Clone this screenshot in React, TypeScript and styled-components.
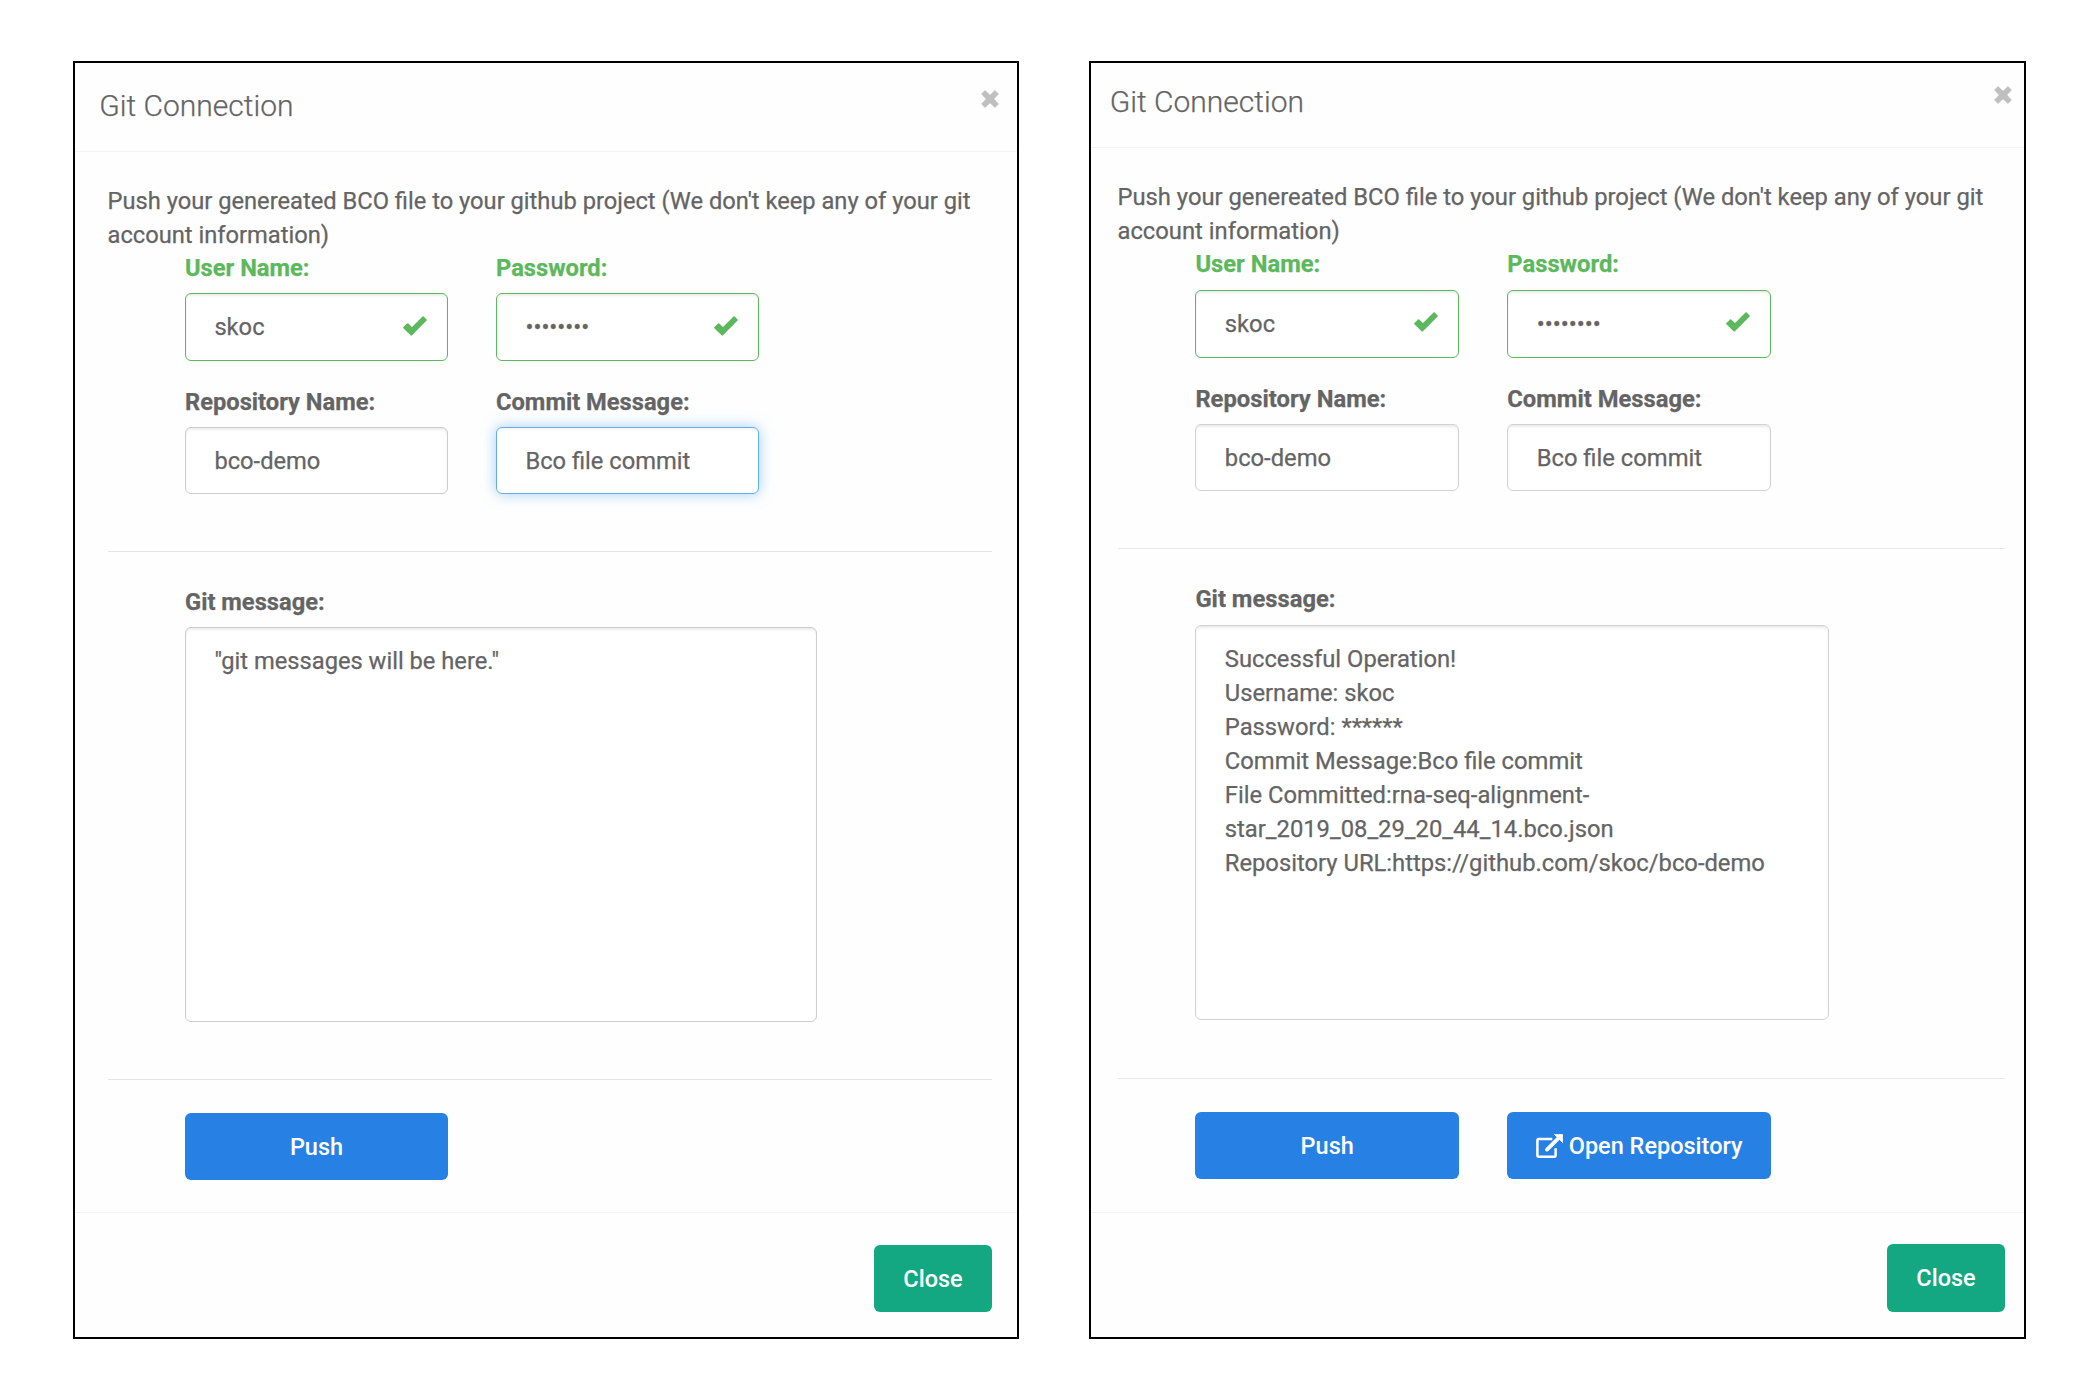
import styled, { createGlobalStyle, css, ThemeProvider } from 'styled-components';

const GlobalStyle = createGlobalStyle`
  * { box-sizing: border-box; }
  body {
    margin: 0;
    background: #fff;
    color: #646464;
    font-family: Roboto, "Liberation Sans", sans-serif;
  }
`;

type Metrics = {
  width: number;
  header: number;
  titleTop: number;
  titleLeft: number;
  closeRight: number;
  padLeft: number;
  padRight: number;
  introTop: number;
  introHeight: number;
  indent: number;
  colWidth: number;
  colGap: number;
  labelGap: number;
  validHeight: number;
  outputWidth: number;
  outputHeight: number;
  outputAfter: number;
  buttonHeight: number;
  bodyBottom: number;
  footerTop: number;
  font: number;
  line: string;
  rule: string;
};

type Themed = { theme: any };

const Page = styled.main`
  display: flex;
  align-items: flex-start;
  gap: 70px;
  width: 2100px;
  height: 1400px;
  padding: 61px 0 0 73px;
`;

const Modal = styled.section<Themed>`
  display: flex;
  flex-direction: column;
  width: ${(p) => p.theme.width}px;
  height: 1278px;
  border: 2px solid #000;
  background: #fefefe;
  font-size: ${(p) => p.theme.font}px;
  line-height: 34px;
  -webkit-text-stroke: 0.25px currentColor;
`;

const Header = styled.header<Themed>`
  display: flex;
  flex: none;
  justify-content: space-between;
  align-items: flex-start;
  height: ${(p) => p.theme.header}px;
  padding: ${(p) => p.theme.titleTop}px ${(p) => p.theme.closeRight}px 0 ${(p) => p.theme.titleLeft}px;
  border-bottom: 1px solid #f3f3f3;
`;

const Title = styled.h4`
  margin: 0;
  font-size: 30px;
  font-weight: 300;
  line-height: 34px;
`;

const Dismiss = styled.button`
  display: flex;
  margin-top: 1px;
  padding: 0;
  border: 0;
  background: none;
  color: #bfbfbf;
`;

const Body = styled.div<Themed>`
  flex: none;
  padding: ${(p) => p.theme.introTop}px ${(p) => p.theme.padRight}px ${(p) => p.theme.bodyBottom}px
    ${(p) => p.theme.padLeft}px;
`;

const Intro = styled.p<Themed>`
  height: ${(p) => p.theme.introHeight}px;
  margin: 0 0 0 -0.5px;
  white-space: pre-line;
`;

const Fields = styled.div<Themed>`
  display: grid;
  grid-template-columns: repeat(2, ${(p) => p.theme.colWidth}px);
  column-gap: ${(p) => p.theme.colGap}px;
  row-gap: 24px;
  margin-left: ${(p) => p.theme.indent}px;
`;

const Label = styled.label<Themed & { $valid?: boolean }>`
  display: block;
  margin-bottom: ${(p) => p.theme.labelGap}px;
  font-weight: 700;
  color: ${(p) => (p.$valid ? '#5cb85c' : '#646464')};
`;

const Control = styled.div<Themed & { $state?: 'valid' | 'focus' }>`
  display: flex;
  align-items: center;
  justify-content: space-between;
  height: ${(p) => (p.$state === 'valid' ? p.theme.validHeight : 67)}px;
  padding: 0 20px 0 28.4px;
  border: 1px solid ${(p) => p.theme.line};
  border-radius: 6px;
  background: #fff;
  box-shadow: inset 0 2px 2px rgba(0, 0, 0, 0.075);
  ${(p) => p.$state === 'valid' && css`border-color: #5cb85c;`}
  ${(p) => p.$state === 'focus' && css`
    border-color: #66afe9;
    box-shadow: inset 0 2px 2px rgba(0, 0, 0, 0.04), 0 0 14px rgba(102, 175, 233, 0.6);
  `}

  svg {
    margin-top: -3px;
  }
`;

const Rule = styled.hr<Themed & { $before: number }>`
  height: 1px;
  margin: ${(p) => p.$before}px 0 33px;
  border: 0;
  background: ${(p) => p.theme.rule};
`;

const Message = styled.div<Themed>`
  margin-left: ${(p) => p.theme.indent}px;
`;

const Output = styled.div<Themed>`
  width: ${(p) => p.theme.outputWidth}px;
  height: ${(p) => p.theme.outputHeight}px;
  padding: 16px 28.4px;
  border: 1px solid ${(p) => p.theme.line};
  border-radius: 6px;
  background: #fff;
  box-shadow: inset 0 2px 2px rgba(0, 0, 0, 0.075);
  white-space: pre-line;
`;

const Button = styled.button<Themed & { $tone: 'primary' | 'success' }>`
  display: flex;
  align-items: center;
  justify-content: center;
  gap: 6px;
  height: ${(p) => p.theme.buttonHeight}px;
  padding: 0 28px;
  border: 0;
  border-radius: 6px;
  background: ${(p) => (p.$tone === 'primary' ? '#2780e3' : '#13a881')};
  color: #fff;
  font: 500 23.5px/34px Roboto, "Liberation Sans", sans-serif;
  white-space: nowrap;
  -webkit-text-stroke: 0;
`;

const Footer = styled.footer<Themed>`
  display: flex;
  flex: 1;
  justify-content: flex-end;
  align-items: flex-start;
  padding: ${(p) => p.theme.footerTop}px ${(p) => p.theme.padRight}px 0;
  border-top: 1px solid #f3f3f3;
`;

const CloseButton = styled(Button)`
  width: 118px;
`;

const Check = () => (
  <svg width="24" height="20" viewBox="0 0 24 20">
    <path
      d="M.4 11.1 4 7.5q.6-.5 1.2 0L9 11 19.5.5q.6-.6 1.200 0L23.600 3.400q.5.6 0 1.200L9 19.300q-.7.7-1.400 0L.4 12.300q-.5-.6 0-1.200Z"
      fill="#5cb85c"
    />
  </svg>
);

const Cross = () => (
  <svg width="18" height="18" viewBox="0 0 18 18">
    <path
      d="M4 .6 9 5.300 14 .6 17.400 4 12.700 9l4.700 5-3.400 3.400L9 12.700 4 17.400.6 14 5.300 9 .6 4Z"
      fill="currentColor"
      stroke="currentColor"
      strokeWidth="0.8"
      strokeLinejoin="round"
    />
  </svg>
);

const OpenIcon = () => (
  <svg width="27" height="24" viewBox="0 0 27 24" fill="none">
    <path
      d="M16.300 5H2.800A1.400 1.400 0 0 0 1.400 6.400v15A1.400 1.400 0 0 0 2.800 22.800h15.400a1.400 1.400 0 0 0 1.400-1.400V14.300"
      stroke="#fff"
      strokeWidth="2.5"
    />
    <path d="M11 15.600 22 4.600" stroke="#fff" strokeWidth="3.8" strokeLinecap="round" />
    <path d="M18.400.4h8.200v8.200Z" fill="#fff" stroke="#fff" strokeWidth="0.8" strokeLinejoin="round" />
  </svg>
);

const before: Metrics = {
  width: 946, header: 89, titleTop: 26, titleLeft: 24.3, closeRight: 18, padLeft: 33, padRight: 25,
  introTop: 32, introHeight: 67, indent: 77, colWidth: 263, colGap: 48, labelGap: 8, validHeight: 68,
  outputWidth: 632, outputHeight: 395, outputAfter: 57, buttonHeight: 67, bodyBottom: 32, footerTop: 32,
  font: 23.7, line: '#ccc', rule: '#e6e6e6',
};

const after: Metrics = {
  width: 937, header: 85, titleTop: 22, titleLeft: 18.8, closeRight: 12, padLeft: 27, padRight: 19,
  introTop: 32, introHeight: 67.3, indent: 77.4, colWidth: 263.7, colGap: 48.2, labelGap: 8.4, validHeight: 68.3,
  outputWidth: 633.6, outputHeight: 395.7, outputAfter: 57.5, buttonHeight: 67.5, bodyBottom: 32.5, footerTop: 31.3,
  font: 23.77, line: '#d2d2d2', rule: '#e9e9e9',
};

type GitModalProps = {
  metrics: Metrics;
  focused?: boolean;
  output: string;
  pushed?: boolean;
};

function GitModal({ metrics, focused, output, pushed }: GitModalProps) {
  return (
    <ThemeProvider theme={metrics}>
      <Modal>
        <Header>
          <Title>Git Connection</Title>
          <Dismiss aria-label="Dismiss"><Cross /></Dismiss>
        </Header>
        <Body>
          <Intro>
            {"Push your genereated BCO file to your github project (We don't keep any of your git\naccount information)"}
          </Intro>
          <Fields>
            <div>
              <Label $valid>User Name:</Label>
              <Control $state="valid">skoc<Check /></Control>
            </div>
            <div>
              <Label $valid>Password:</Label>
              <Control $state="valid">••••••••<Check /></Control>
            </div>
            <div>
              <Label>Repository Name:</Label>
              <Control>bco-demo</Control>
            </div>
            <div>
              <Label>Commit Message:</Label>
              <Control $state={focused ? 'focus' : undefined}>Bco file commit</Control>
            </div>
          </Fields>
          <Rule $before={57} />
          <Message>
            <Label>Git message:</Label>
            <Output>{output}</Output>
          </Message>
          <Rule $before={metrics.outputAfter} />
          <Fields>
            <Button $tone="primary">Push</Button>
            {pushed && <Button $tone="primary"><OpenIcon />Open Repository</Button>}
          </Fields>
        </Body>
        <Footer>
          <CloseButton $tone="success">Close</CloseButton>
        </Footer>
      </Modal>
    </ThemeProvider>
  );
}

const result = [
  'Successful Operation!',
  'Username: skoc',
  'Password: ******',
  'Commit Message:Bco file commit',
  'File Committed:rna-seq-alignment-star_2019_08_29_20_44_14.bco.json',
  'Repository URL:https://github.com/skoc/bco-demo',
].join('\n');

export default function App() {
  return (
    <>
      <GlobalStyle />
      <Page>
        <GitModal metrics={before} focused output={'"git messages will be here."'} />
        <GitModal metrics={after} pushed output={result} />
      </Page>
    </>
  );
}
